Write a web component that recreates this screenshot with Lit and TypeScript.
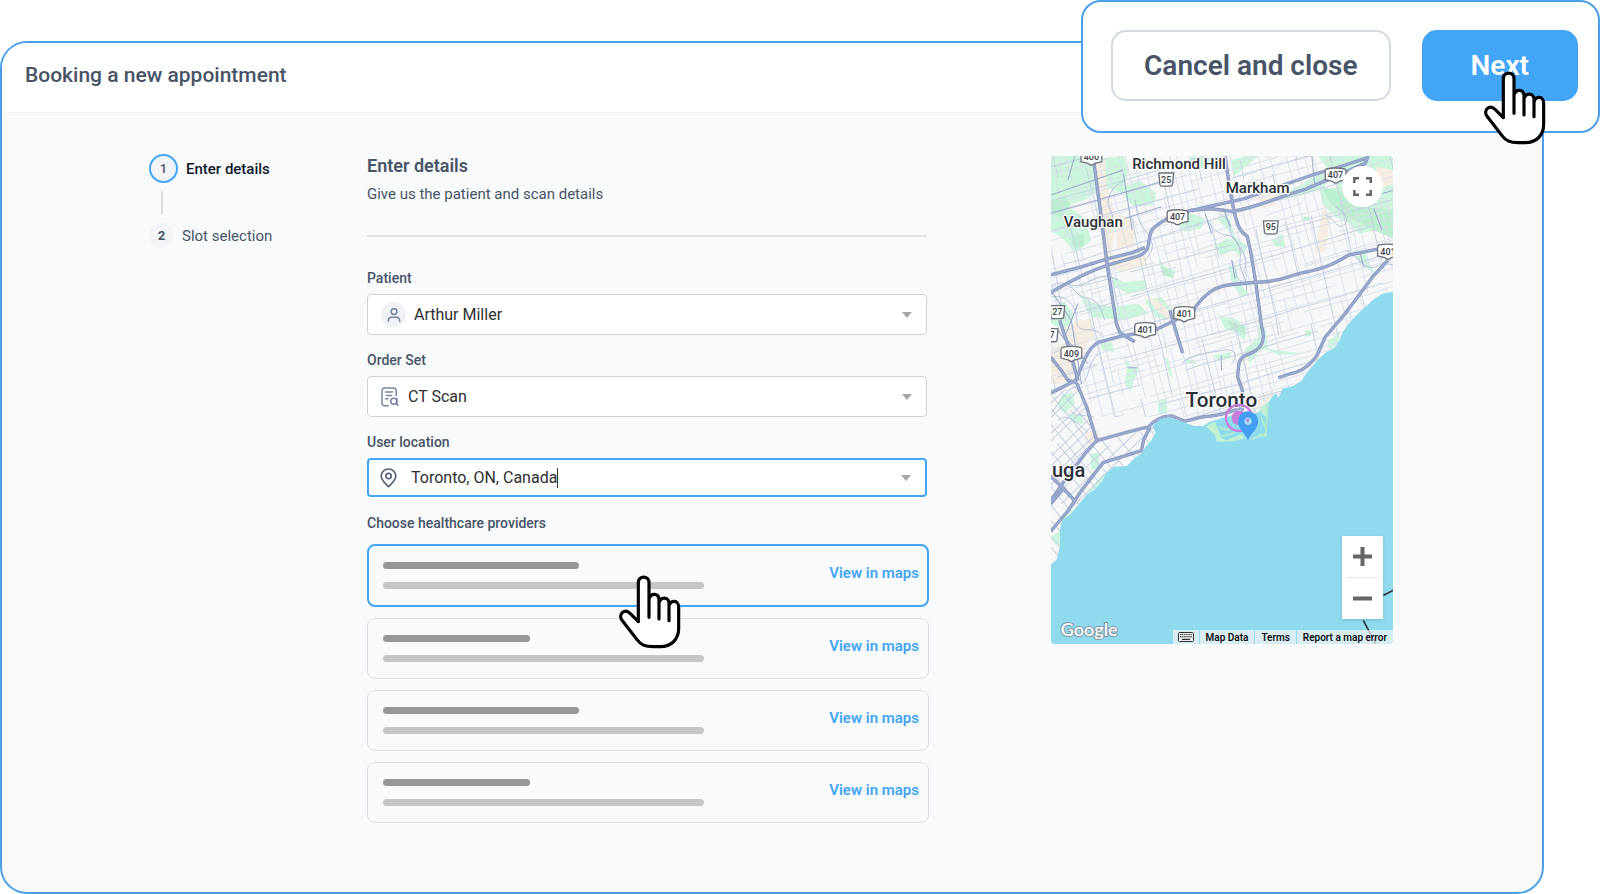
import { LitElement, html, svg, css } from "lit";
import { customElement, state } from "lit/decorators.js";
import { classMap } from "lit/directives/class-map.js";

/* ---------- map data ---------- */

// Repeatable pseudo random numbers, so that the street grid is the same on each render.
function randomizer(seed: number) {
  let s = seed;
  return () => {
    s = (s * 16807) % 2147483647;
    return s / 2147483647;
  };
}

// Broken, slightly bent parallel lines: along the x axis or along the y axis.
function streets(seed: number, vertical: boolean, from: number, to: number, step: number, min: number, max: number, keep: number) {
  const rnd = randomizer(seed);
  let d = "";
  for (let p = from; p < to; p += step * (0.7 + rnd() * 0.6)) {
    let q = min;
    let off = p;
    let open = false;
    while (q < max) {
      const len = 50 + rnd() * 110;
      const next = off + (rnd() - 0.5) * 7;
      const a = Math.round(off);
      const b = Math.round(next);
      const q0 = Math.round(q);
      const q1 = Math.round(q + len);
      if (rnd() < keep) {
        if (!open) d += vertical ? `M${a} ${q0}` : `M${q0} ${a}`;
        d += vertical ? `L${b} ${q1}` : `L${q1} ${b}`;
        open = true;
      } else {
        open = false;
      }
      off = next;
      q += len;
    }
  }
  return d;
}

const LAND =
  "M18 18H1044V424L1012 430 985 447 960 470 940 488 925 503 908 522 893 545 882 570 868 592 842 606 818 628 800 648 784 668 770 690 745 706 712 715 700 742 692 728 676 746 664 768 648 780 632 788 610 792 570 792 540 800 520 806 498 812 474 826 448 826 425 818 395 806 370 800 345 806 322 826 332 846 318 872 304 886 290 908 272 920 246 946 208 948 184 966 172 992 150 1016 128 1030 96 1068 76 1092 52 1108 46 1136 46 1186 36 1226 18 1242Z";

const GRID_EW = streets(11, false, -100, 1300, 25, -300, 1300, 0.72);
const GRID_NS = streets(23, true, -200, 1500, 27, -100, 1400, 0.72);
const MAIN_EW = streets(5, false, -100, 1300, 88, -300, 1300, 0.8);
const MAIN_NS = streets(7, true, -200, 1500, 96, -100, 1400, 0.7);
const WEST_A = streets(31, false, 500, 1400, 27, -700, 700, 0.9);
const WEST_B = streets(37, true, -900, 300, 30, 400, 1500, 0.9);

const PARKS = [
  "M18 18H150L140 60 120 110 60 100 18 120Z",
  "M60 62L120 30 236 18 250 60 235 130 180 110 120 150 18 180V120Z",
  "M235 110L285 92 335 130 325 165 270 170 245 150Z",
  "M18 190L80 175 120 205 140 270 90 310 60 270 18 240Z",
  "M455 60L500 40 530 20H430Z",
  "M560 30L600 18H640L590 60 565 80Z",
  "M720 130L790 90 830 70 850 92 830 118 760 138 700 150Z",
  "M820 18H1044V260L990 240 940 250 900 210 870 200 830 160 825 120 880 110 850 60Z",
  "M390 215L440 190 480 205 470 235 420 245Z",
  "M505 290L545 265 585 280 590 312 560 302 530 315Z",
  "M515 200L555 205 570 260 610 290 580 320 560 250 530 220Z",
  "M680 270L712 250 720 290 692 290Z",
  "M340 325L362 350 392 362 385 385 352 372Z",
  "M550 340L575 360 582 395 610 430 590 440 560 400Z",
  "M200 380L240 395 300 390 305 420 250 430 210 410Z",
  "M300 450L350 440 380 480 370 510 330 500Z",
  "M100 430L150 460 200 470 280 460 310 490 240 510 140 500Z",
  "M520 495L570 505 605 530 600 570 575 548 540 535Z",
  "M640 500L662 540 668 590 640 605 615 640 596 600 640 560Z",
  "M240 618L258 650 282 654 272 678 258 722 240 700 246 660Z",
  "M360 624L370 626 382 676 374 676Z",
  "M418 625L450 630 456 640 428 640Z",
  "M505 615L560 605 556 622 520 632Z",
  "M340 752L366 745 366 790 340 788Z",
  "M780 540H798V556L780 560Z",
  "M846 570L868 560 884 540 880 580 850 600Z",
  "M640 590L700 600 760 608 758 590 762 612 700 612Z",
  "M50 735L84 725 90 760 60 790 40 770Z",
  "M70 790L110 795 118 820 86 815Z",
  "M136 910L164 905 162 950 140 960Z",
  "M172 972L210 948 170 1000 128 1030 150 1000Z",
  "M96 1068L72 1096 52 1108 66 1086Z",
  "M18 1160L46 1140V1184L30 1180Z",
  "M18 470L60 455 90 500 70 530 110 560 96 580 60 540 18 520Z",
  "M165 580L200 575 210 605 175 600Z",
  "M930 320L960 310 975 345 990 370 958 350Z",
];

const DEEP_PARKS = [
  "M18 150L60 140 78 165 50 200 18 190Z",
  "M80 255L118 250 116 290 84 288Z",
  "M830 110L900 130 960 170 1044 180V265L985 240 940 215 890 195 850 150Z",
  "M775 200H792V212H775Z",
  "M345 350L380 360 384 384 358 376Z",
  "M545 510L600 530 598 550 565 540Z",
];

const SANDS = [
  "M152 40L182 30 186 110 215 200 200 330 178 330 168 180Z",
  "M215 190L270 210 268 290 215 300Z",
  "M200 320L300 318 305 345 230 365 200 350Z",
  "M990 50L1044 60V105L1010 110Z",
  "M640 140L700 135 690 165 650 176Z",
  "M830 180L862 190 850 230 842 300 808 310 820 250Z",
  "M310 440L340 450 380 490 372 510 330 475Z",
  "M18 590L96 570 96 660 60 700 18 700Z",
  "M60 530L140 500 150 560 110 600 70 580Z",
  "M120 845L160 840 165 880 124 880Z",
  "M640 740L690 715 676 745 640 775 610 790Z",
  "M680 405L740 395 700 410Z",
];

const CREEKS = [
  "M486 208C500 240 520 250 550 256S590 300 585 330 605 370 605 420",
  "M520 190C540 200 560 215 555 235S590 290 600 320 590 350 606 380",
  "M240 90C220 100 195 120 190 150S215 190 200 220",
  "M18 410C50 380 80 420 120 400S170 370 220 388",
  "M70 400C90 420 100 440 130 444S170 480 180 510",
  "M18 440C60 430 95 460 96 510S150 520 170 556",
  "M270 150C280 180 270 200 300 240S330 300 300 330",
  "M840 196C870 200 870 240 895 225S890 180 870 170",
  "M900 300C930 310 940 340 970 350S1000 330 1044 345",
  "M18 790C50 750 60 720 100 705S120 650 160 610",
  "M130 845C80 800 60 790 40 810",
  "M148 800C110 790 90 800 78 780",
  "M560 330C580 360 560 380 600 400L740 380",
  "M560 640C580 620 575 590 530 600S440 610 410 640",
];

const ARTERIES = [
  "M18 190L350 95",
  "M90 18L70 90M236 70L262 240M235 60L18 135",
  "M350 170L240 205",
  "M800 18L808 100",
  "M1044 120L925 158M985 175L1010 240",
  "M18 420L80 510 110 700M40 540L100 620",
  "M480 190L500 250M535 175L555 230",
  "M560 330L570 385M945 310L955 350",
  "M250 652H278M528 615L530 660",
  "M100 460L60 560 130 640",
];

const HIGHWAYS = [
  "M145 18L168 190 188 350 215 520 226 548 270 574",
  "M18 374L110 350 190 325 260 308 300 292",
  "M18 426C70 400 110 370 185 346L280 318C330 300 300 250 330 230 380 190 400 200 440 180L500 176 560 184C640 170 700 140 780 118L850 88 960 40 968 18",
  "M440 182C500 165 550 158 600 145L810 72 900 45 970 22",
  "M540 18L552 100 566 178C578 230 586 246 606 258L616 300 632 396 650 530C666 580 640 600 610 612 580 620 580 640 578 680L592 720V780",
  "M444 480C480 430 510 405 570 402L632 396C700 395 720 380 780 366 860 350 880 330 910 315L1000 296",
  "M430 490L330 540 226 558 160 576C120 600 110 660 92 690L18 728",
  "M375 480L392 540 413 608",
  "M1028 330L985 376 930 450 885 508M908 480L840 560 815 616C780 660 760 664 735 670L700 682",
  "M18 620L50 660 70 690 95 696M45 510L75 600 100 690",
  "M95 696L126 770 156 870C210 856 260 840 310 830 330 806 350 796 380 796L420 812 470 800C520 796 560 786 592 768",
  "M156 870L120 910 60 990 18 1050",
  "M316 828L296 870 290 900 175 936 110 1020 70 1080 18 1142",
  "M18 975L90 1050M18 1060L60 1010",
];

interface Shield {
  x: number;
  y: number;
  text: string;
  w: number;
  crest: boolean;
}

const SHIELDS: Shield[] = [
  { x: 140, y: 22, text: "400", w: 62, crest: true },
  { x: 364, y: 89, text: "25", w: 44, crest: false },
  { x: 398, y: 201, text: "407", w: 62, crest: true },
  { x: 871, y: 76, text: "407", w: 62, crest: true },
  { x: 677, y: 232, text: "95", w: 44, crest: false },
  { x: 1028, y: 304, text: "401", w: 62, crest: true },
  { x: 38, y: 486, text: "27", w: 44, crest: false },
  { x: 418, y: 491, text: "401", w: 62, crest: true },
  { x: 301, y: 539, text: "401", w: 62, crest: true },
  { x: 22, y: 555, text: "7", w: 36, crest: false },
  { x: 80, y: 610, text: "409", w: 62, crest: true },
];

const LABELS = [
  { x: 262, y: 56, size: 45, text: "Richmond Hill" },
  { x: 542, y: 129, size: 45, text: "Markham" },
  { x: 57, y: 231, size: 45, text: "Vaughan" },
  { x: 422, y: 770, size: 62, text: "Toronto" },
  { x: 22, y: 980, size: 60, text: "uga" },
];

function shieldShape({ x, y, w, crest }: Shield) {
  const l = x - w / 2;
  const r = x + w / 2;
  return crest
    ? `M${l + 3} ${y - 19}Q${x} ${y - 25} ${r - 3} ${y - 19}Q${r + 2} ${y - 14} ${r} ${y - 4}V${y + 13}L${x + 10} ${y + 18}Q${x} ${y + 28} ${x - 10} ${y + 18}L${l} ${y + 13}V${y - 4}Q${l - 2} ${y - 14} ${l + 3} ${y - 19}Z`
    : `M${l} ${y - 20}H${r}L${r - 3} ${y + 14}Q${r - 4} ${y + 19} ${r - 9} ${y + 19}H${l + 9}Q${l + 4} ${y + 19} ${l + 3} ${y + 14}Z`;
}

/* ---------- icons ---------- */

const handCursor = html`<svg class="hand" viewBox="26 28 186 222" aria-hidden="true">
  <path
    d="M84 168V51C84 29 116 29 116 51V100C122 80 146 82 146 103V112C150 92 176 93 176 113V122C180 101 205 103 205 124V188C205 222 182 243 150 243H128C104 243 92 238 80 222L34 162C24 146 42 126 60 144Z"
    fill="#fff"
  />
  <path
    d="M84 168V51C84 29 116 29 116 51V155M116 100C122 80 146 82 146 103V160M146 112C150 92 176 93 176 113V165M176 122C180 101 205 103 205 124V188C205 222 182 243 150 243H128C104 243 92 238 80 222L34 162C24 146 42 126 60 144L84 168"
    fill="none"
    stroke="#000"
    stroke-width="9.5"
    stroke-linejoin="round"
    stroke-linecap="round"
  />
</svg>`;

const arrow = html`<svg class="arrow" viewBox="0 0 10 6" preserveAspectRatio="none" aria-hidden="true"><path d="M0 0H10L5 6Z" fill="#a6a6a6" /></svg>`;

const personIcon = html`<span class="avatar"
  ><svg viewBox="0 0 14 14" width="14" height="14" fill="none" stroke="#7485a0" stroke-width="1.5" stroke-linecap="round" aria-hidden="true">
    <circle cx="7" cy="3.6" r="2.9" />
    <path d="M1.4 13.2V12A3 3 0 0 1 4.400 9.200H9.600A3 3 0 0 1 12.600 12V13.200" /></svg
></span>`;

const orderIcon = html`<svg class="order" viewBox="0 0 18 20" fill="none" stroke="#7485a0" stroke-width="1.500" stroke-linecap="round" stroke-linejoin="round" aria-hidden="true">
  <path d="M15.200 8.500V3.500A2.500 2.500 0 0 0 12.700 1H3.500A2.500 2.500 0 0 0 1 3.500V16.200A2.500 2.500 0 0 0 3.500 18.700H7.200" />
  <path d="M4.500 5H11.500M5.500 8.400H10.500M4.500 11.700H7" />
  <circle cx="12.800" cy="14.300" r="3" />
  <path d="M15.800 11.300V17.200L16.800 18.300" />
</svg>`;

const pinIcon = html`<svg class="pin" viewBox="0 0 17 20" fill="none" stroke="#56637a" stroke-width="1.700" aria-hidden="true">
  <path d="M8.500 18.700C6 16 1.200 12.200 1.200 8.200A7.300 7.200 0 0 1 15.800 8.200C15.800 12.200 11 16 8.500 18.700Z" stroke-linejoin="round" />
  <circle cx="8.500" cy="8" r="2.700" />
</svg>`;

/* ---------- map ---------- */

@customElement("area-map")
export class AreaMap extends LitElement {
  static styles = css`
    :host {
      display: block;
      font-family: Roboto, "Liberation Sans", sans-serif;
    }
    .map {
      position: relative;
      aspect-ratio: 342 / 488;
      overflow: hidden;
      border-radius: 4px;
      background: #90daee;
    }
    .canvas {
      display: block;
      width: 100%;
      height: 100%;
    }
    .place {
      fill: #2b2f36;
      stroke: #fff;
      stroke-width: 7px;
      stroke-linejoin: round;
      paint-order: stroke;
      font-weight: 500;
    }
    .number {
      fill: #3a3f48;
      font-size: 27px;
      font-weight: 500;
      text-anchor: middle;
    }
    .logo {
      font-family: Lato, sans-serif;
      font-weight: 600;
      font-size: 54px;
      fill: #fff;
      stroke: #7d97a3;
      stroke-width: 6px;
      paint-order: stroke;
    }
    button {
      display: grid;
      place-items: center;
      padding: 0;
      border: 0;
      background: #fff;
    }
    .expand {
      position: absolute;
      top: 10px;
      right: 10px;
      width: 41px;
      height: 41px;
      border-radius: 50%;
    }
    .zoom {
      position: absolute;
      right: 10px;
      bottom: 25px;
      width: 41px;
      background: #fff;
      box-shadow: 0 1px 3px rgb(0 0 0 / 15%);
    }
    .zoom button {
      width: 41px;
      height: 41px;
    }
    .rule {
      height: 1px;
      margin: 0 5px;
      background: #e6e6e6;
    }
    .credits {
      position: absolute;
      right: 0;
      bottom: 0;
      display: flex;
      gap: 1px;
      height: 14px;
      font-size: 10px;
      line-height: 15px;
      font-weight: 500;
    }
    .credits > * {
      padding: 0 6px;
      background: rgb(245 245 245 / 70%);
      color: #000;
      text-decoration: none;
    }
    .credits > button {
      padding: 0 5px;
    }
  `;

  render() {
    return html`<div class="map">
      <svg class="canvas" viewBox="18 18 1026 1461" preserveAspectRatio="xMidYMid slice" role="img" aria-label="Map of the Toronto area">
        <defs>
          <clipPath id="land"><path d=${LAND} /></clipPath>
          <clipPath id="core"><path d="M18 18H1044V800H170L100 700 18 730Z" /></clipPath>
          <clipPath id="west"><path d="M18 740L95 700 156 870 330 830V900L100 1100 18 1260Z" /></clipPath>
        </defs>
        <g clip-path="url(#land)">
          <rect x="18" y="18" width="1026" height="1240" fill="#f7f7f8" />
          ${PARKS.map((d) => svg`<path d=${d} fill="#cbf5dc" />`)}
          ${DEEP_PARKS.map((d) => svg`<path d=${d} fill="#b9eecf" />`)}
          ${SANDS.map((d) => svg`<path d=${d} fill="#f5ede1" />`)}
          <g clip-path="url(#core)" fill="none">
            <g stroke="#d8e0ea" stroke-width="2.500">
              <path transform="rotate(-16)" d=${GRID_EW} />
              <path transform="rotate(-14)" d=${GRID_NS} />
            </g>
            <g stroke="#c6d2e2" stroke-width="3">
              <path transform="rotate(-16)" d=${MAIN_EW} />
              <path transform="rotate(-13)" d=${MAIN_NS} />
            </g>
          </g>
          <g clip-path="url(#west)" fill="none" stroke="#c6d0e2" stroke-width="3">
            <path transform="rotate(-44)" d=${WEST_A} />
            <path transform="rotate(-40)" d=${WEST_B} />
          </g>
          <g fill="none" stroke="#aebcd8" stroke-width="2.500">${CREEKS.map((d) => svg`<path d=${d} />`)}</g>
          <g fill="none" stroke="#97a6ca" stroke-width="3">${ARTERIES.map((d) => svg`<path d=${d} />`)}</g>
          <g fill="none" stroke="#8394be" stroke-width="10" stroke-linejoin="round">${HIGHWAYS.map((d) => svg`<path d=${d} />`)}</g>
          <g fill="none" stroke="#9ba9cd" stroke-width="6" stroke-linejoin="round">${HIGHWAYS.map((d) => svg`<path d=${d} />`)}</g>
        </g>
        <g fill="#bff0d2">
          <path d="M482 828L510 812 520 840 530 862 550 872 530 874 514 872 508 852Z" />
          <path d="M550 866L590 850 600 862 570 872 540 874Z" />
          <path d="M640 780L668 752 664 800 652 790Z" />
        </g>
        <path d="M655 775L668 760 662 856 640 852M648 800L660 830M520 830L545 838 560 832M530 858L570 846M620 866L664 848" fill="none" stroke="#b4ecc9" stroke-width="5" />
        <path d="M1014 1334L1044 1318M954 1408L992 1480" fill="none" stroke="#2e3338" stroke-width="5" />
        ${SHIELDS.map(
          (s) => svg`<path d=${shieldShape(s)} fill="#fff" stroke="#6c717a" stroke-width="4" />
            <text class="number" x=${s.x} y=${s.y + 9}>${s.text}</text>`,
        )}
        ${LABELS.map((l) => svg`<text class="place" x=${l.x} y=${l.y} font-size=${l.size}>${l.text}</text>`)}
        <circle cx="582" cy="802" r="39" fill="none" stroke="#c77ddc" stroke-width="7" />
        <circle cx="582" cy="802" r="22" fill="#c77ddc" />
        <path d="M609 870C602 846 579 838 579 812A30 30 0 0 1 639 812C639 838 616 846 609 870Z" fill="#419ef2" />
        <circle cx="609" cy="812" r="11" fill="#a9dcf4" />
        <path d="M601 806L613 803 609 818Z" fill="#b08be0" />
        <text class="logo" x="48" y="1455">Google</text>
      </svg>
      <button class="expand" aria-label="Full screen">
        <svg width="19" height="19" viewBox="0 0 19 19" fill="none" stroke="#666" stroke-width="2.500" aria-hidden="true">
          <path d="M1.300 6V1.300H6M13 1.300H17.700V6M17.700 13V17.700H13M6 17.700H1.300V13" />
        </svg>
      </button>
      <div class="zoom">
        <button aria-label="Zoom in">
          <svg width="19" height="19" viewBox="0 0 19 19" fill="none" stroke="#666" stroke-width="4" aria-hidden="true"><path d="M0 9.500H19M9.500 0V19" /></svg>
        </button>
        <div class="rule"></div>
        <button aria-label="Zoom out">
          <svg width="19" height="19" viewBox="0 0 19 19" fill="none" stroke="#666" stroke-width="4" aria-hidden="true"><path d="M0 9.500H19" /></svg>
        </button>
      </div>
      <div class="credits">
        <button aria-label="Keyboard shortcuts">
          <svg width="16" height="10" viewBox="0 0 16 10" aria-hidden="true">
            <rect x=".5" y=".5" width="15" height="9" rx="1" fill="#e8eef0" stroke="#333" />
            <path d="M2 2.500H14M2 4.700H14" stroke="#333" stroke-width="1.200" stroke-dasharray="1.300 .8" />
            <path d="M4 7.300H12" stroke="#333" stroke-width="1.200" />
          </svg>
        </button>
        <span>Map Data</span>
        <a href="#terms">Terms</a>
        <a href="#report">Report a map error</a>
      </div>
    </div>`;
  }
}

/* ---------- page ---------- */

@customElement("app-root")
export class AppRoot extends LitElement {
  static styles = css`
    :host {
      display: block;
      font-family: Roboto, "Liberation Sans", sans-serif;
      color: #475467;
      background: #fff;
    }
    * {
      box-sizing: border-box;
    }
    h1,
    h2,
    p,
    ol,
    ul {
      margin: 0;
      padding: 0;
      list-style: none;
    }
    .page {
      position: relative;
      display: flex;
      min-height: 100vh;
      padding: 41px 56px 0 0;
    }
    .card {
      flex: 1;
      overflow: hidden;
      border: 2px solid #4b9fe8;
      border-radius: 27px;
      background: #f9fafc;
    }
    .head {
      padding: 18px 23px 22px;
      border-bottom: 1px solid #eef0f3;
      background: #fff;
    }
    h1 {
      font-size: 21px;
      line-height: 29px;
      font-weight: 500;
    }
    .content {
      display: grid;
      grid-template-columns: 218px minmax(0, 560fr) minmax(0, 466fr);
      align-items: start;
      padding: 41px 149px 60px 147px;
    }
    .step {
      display: flex;
      align-items: center;
      gap: 8px;
      font-size: 15px;
      line-height: 20px;
    }
    .dot {
      display: grid;
      place-items: center;
      width: 25px;
      height: 25px;
      border-radius: 50%;
      background: #f2f4f7;
      font-size: 13px;
      font-weight: 700;
    }
    .current {
      color: #101828;
      font-weight: 500;
    }
    .current .dot {
      width: 29px;
      height: 29px;
      border: 2px solid #42a5f5;
      color: #475467;
      font-weight: 500;
    }
    .link-line {
      width: 2px;
      height: 24px;
      margin: 8px 12px;
      background: #dcdee2;
    }
    .form,
    .side {
      padding-top: 2px;
    }
    .side {
      padding-left: 124px;
    }
    h2 {
      font-size: 18px;
      line-height: 20px;
      font-weight: 600;
    }
    .intro {
      margin-top: 8px;
      padding-bottom: 31px;
      border-bottom: 2px solid #e1e3e7;
      font-size: 15px;
      line-height: 20px;
    }
    .label {
      display: block;
      margin: 15px 0 6px;
      font-size: 14px;
      line-height: 20px;
      font-weight: 500;
    }
    .intro + .label {
      margin-top: 31px;
    }
    .field {
      display: flex;
      align-items: center;
      height: 41px;
      padding: 0 14px 0 13px;
      border: 1px solid #d0d2d6;
      border-radius: 4px;
      background: #fff;
    }
    .field.focused {
      height: 39px;
      padding: 0 14px 0 11px;
      border: 2px solid #42a5f5;
    }
    select,
    input {
      appearance: none;
      min-width: 0;
      margin: 0;
      padding: 0;
      border: 0;
      outline: 0;
      background: none;
      color: #2f2f2f;
      font: inherit;
      font-size: 16px;
      line-height: 24px;
    }
    select {
      flex: 1;
    }
    input {
      field-sizing: content;
    }
    .caret {
      width: 1px;
      height: 20px;
      background: #333;
    }
    .avatar {
      display: grid;
      place-items: center;
      width: 25px;
      height: 25px;
      margin-right: 8px;
      border-radius: 50%;
      background: #f0f2f6;
    }
    .order {
      width: 18px;
      height: 20px;
      margin-right: 9px;
    }
    .pin {
      width: 17px;
      height: 20px;
      margin-right: 14px;
    }
    .arrow {
      width: 10px;
      height: 6px;
      margin-left: auto;
    }
    .label.providers-title {
      margin: 16px 0 11px;
    }
    .providers {
      display: grid;
      gap: 11px;
      margin-right: -2px;
    }
    .provider {
      position: relative;
      display: flex;
      align-items: center;
      justify-content: space-between;
      height: 61px;
      padding: 0 9px 0 15px;
      border: 1px solid #d9dce4;
      border-radius: 8px;
    }
    .provider.selected {
      height: 63px;
      padding: 0 8px 0 14px;
      border: 2px solid #42a5f5;
    }
    .lines {
      display: grid;
      flex: 1;
      gap: 13px;
    }
    .bar {
      width: 44%;
      height: 7px;
      border-radius: 4px;
      background: #969799;
    }
    .bar.short {
      width: 33%;
    }
    .bar.pale {
      width: 72%;
      background: #c5c6c8;
    }
    .provider a {
      padding-bottom: 6px;
      color: #42a5f5;
      font-size: 15px;
      line-height: 20px;
      font-weight: 600;
      text-decoration: none;
    }
    .hand {
      position: absolute;
      z-index: 1;
      width: 62px;
      height: 74px;
      pointer-events: none;
    }
    .provider .hand {
      top: 29px;
      left: 250px;
    }
    .actions {
      position: absolute;
      top: 0;
      right: 0;
      display: flex;
      gap: 31px;
      padding: 28px 20px 30px 28px;
      border: 2px solid #4b9fe8;
      border-radius: 20px;
      background: #fff;
    }
    .actions button {
      position: relative;
      height: 71px;
      padding: 0 31px;
      border: 2px solid #d3d8e1;
      border-radius: 15px;
      background: #fff;
      color: #475467;
      font: inherit;
      font-size: 28px;
      font-weight: 600;
    }
    .actions .next {
      padding: 0 47px;
      border-color: #42a5f5;
      background: #42a5f5;
      color: #fff;
    }
    .next .hand {
      top: 39px;
      left: 60px;
    }
  `;

  @state() private selected = 0;

  private providers = ["", "short", "", "short"];

  render() {
    return html`<main class="page">
      <section class="card">
        <header class="head"><h1>Booking a new appointment</h1></header>
        <div class="content">
          <ol>
            <li class="step current"><span class="dot">1</span>Enter details</li>
            <li class="link-line" role="presentation"></li>
            <li class="step"><span class="dot">2</span>Slot selection</li>
          </ol>
          <form class="form">
            <h2>Enter details</h2>
            <p class="intro">Give us the patient and scan details</p>
            <label class="label" for="patient">Patient</label>
            <div class="field">
              ${personIcon}<select id="patient"><option>Arthur Miller</option></select>${arrow}
            </div>
            <label class="label" for="order">Order Set</label>
            <div class="field">
              ${orderIcon}<select id="order"><option>CT Scan</option></select>${arrow}
            </div>
            <label class="label" for="location">User location</label>
            <div class="field focused">
              ${pinIcon}<input id="location" type="text" value="Toronto, ON, Canada" /><span class="caret"></span>${arrow}
            </div>
            <p class="label providers-title">Choose healthcare providers</p>
            <ul class="providers">
              ${this.providers.map(
                (size, i) => html`<li class=${classMap({ provider: true, selected: i === this.selected })} @click=${() => (this.selected = i)}>
                  <div class="lines">
                    <div class=${classMap({ bar: true, short: size === "short" })}></div>
                    <div class="bar pale"></div>
                  </div>
                  <a href="#map">View in maps</a>
                  ${i === this.selected ? handCursor : null}
                </li>`,
              )}
            </ul>
          </form>
          <aside class="side"><area-map></area-map></aside>
        </div>
      </section>
      <div class="actions">
        <button type="button">Cancel and close</button>
        <button type="button" class="next">Next${handCursor}</button>
      </div>
    </main>`;
  }
}
